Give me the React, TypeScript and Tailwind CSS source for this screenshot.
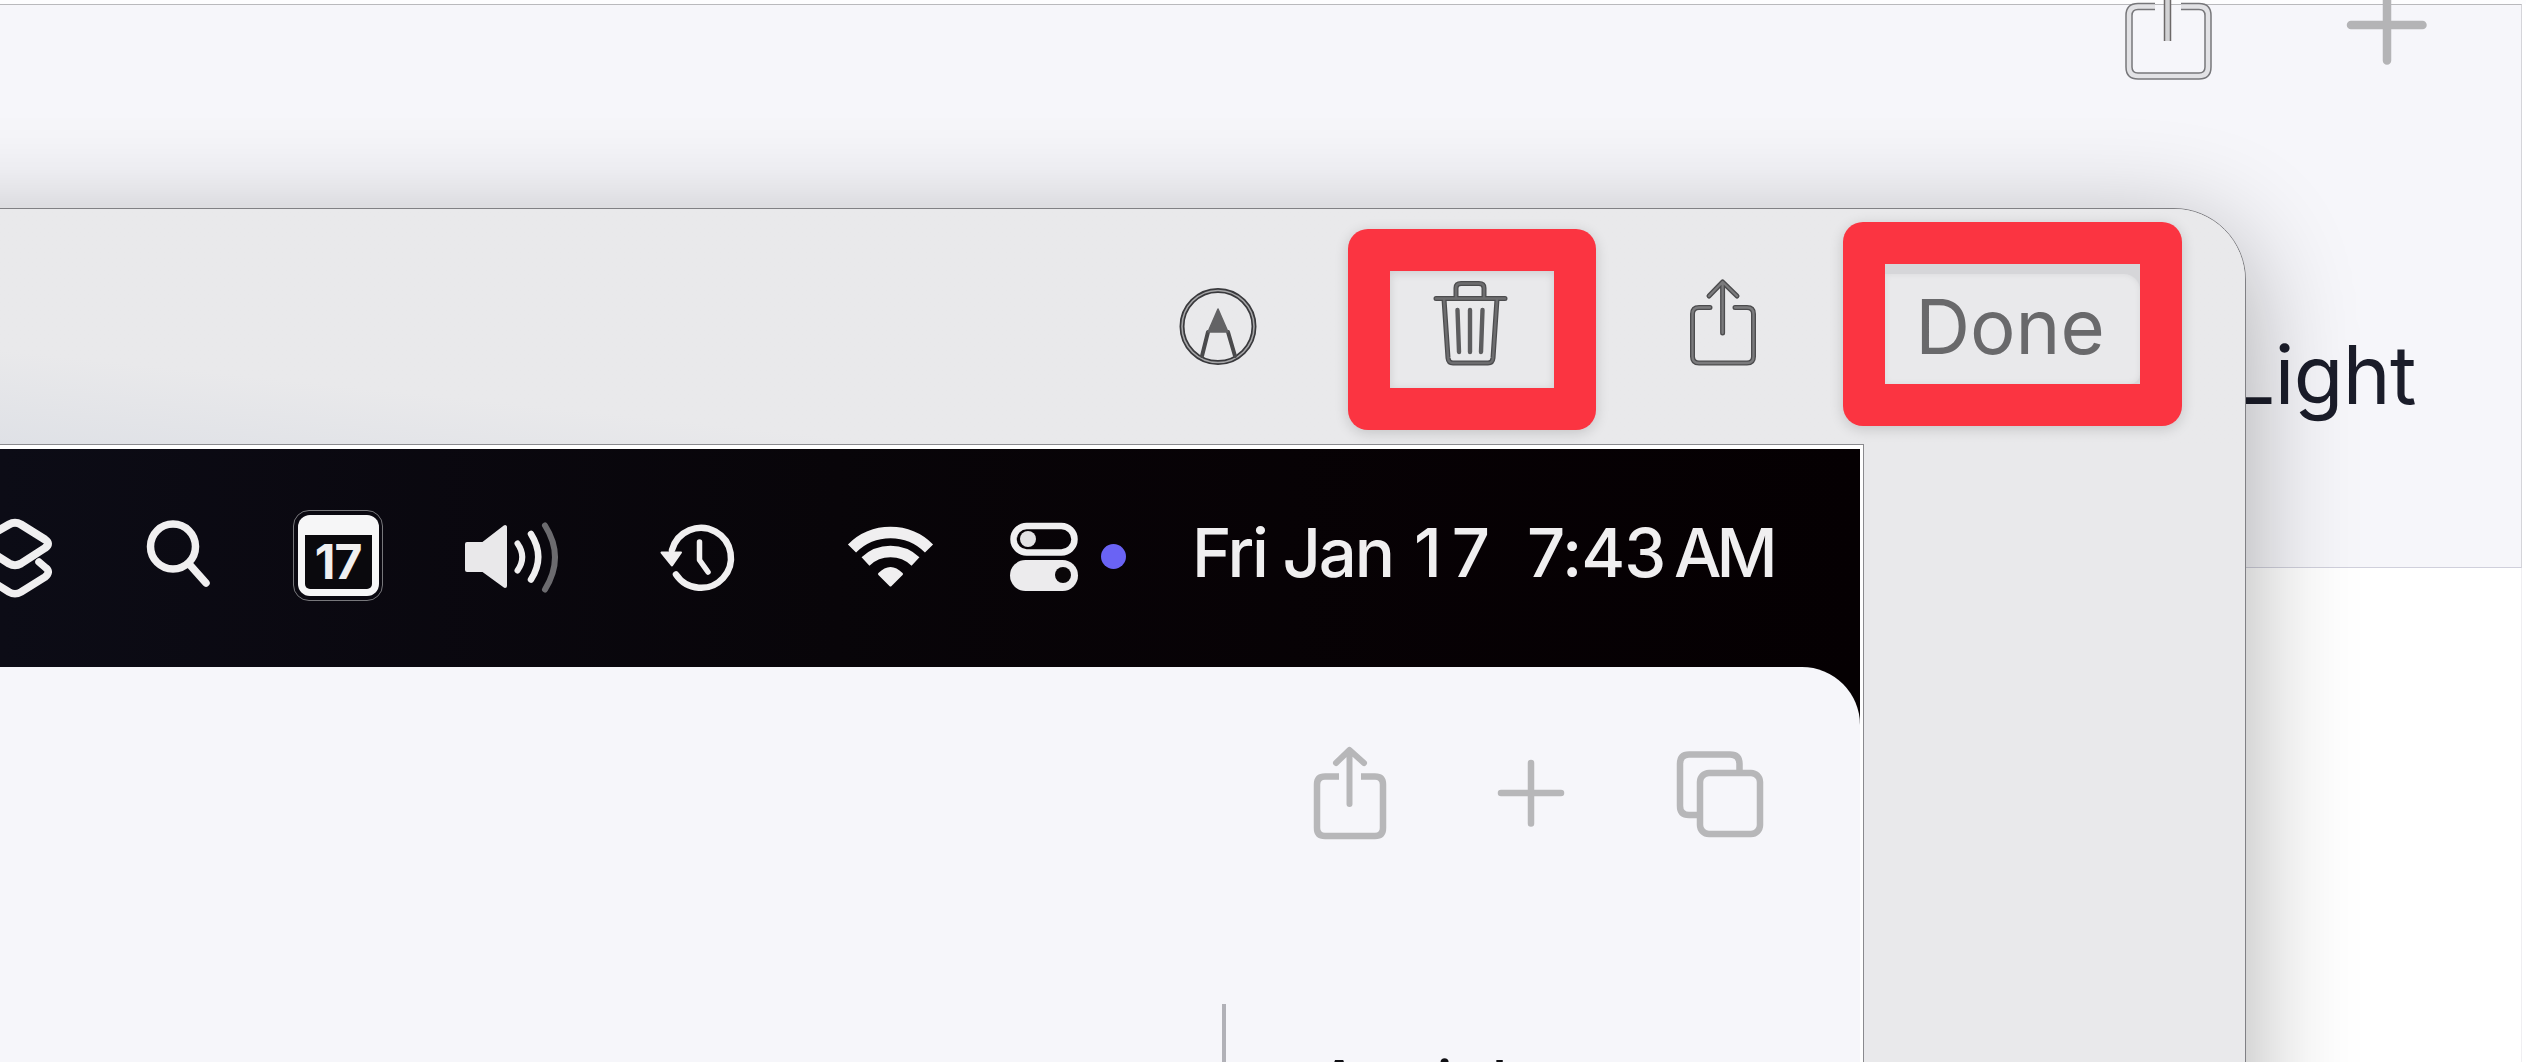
import type { ReactNode } from "react";

type GlyphProps = { box: string; className: string; children: ReactNode };

function Glyph({ box, className, children }: GlyphProps) {
  return (
    <svg viewBox={box} className={`shrink-0 ${className}`} fill="none" strokeLinecap="round" strokeLinejoin="round">
      {children}
    </svg>
  );
}

/* Stroke with a darker rim and a softer core */
function Rimmed({ d, rim, core, w, c }: { d: string; rim: string; core: string; w: number; c: number }) {
  return (
    <>
      <path d={d} stroke={rim} strokeWidth={w} />
      <path d={d} stroke={core} strokeWidth={c} />
    </>
  );
}

function BackgroundWindow() {
  return (
    <div className="flex h-full flex-col bg-white">
      <div className="h-[4px] shrink-0 bg-[#fdfdfe]" />
      <div className="mr-[4px] flex h-[564px] shrink-0 flex-col border-t border-r border-b border-t-[#b9b9bc] border-r-[#d5d5da] border-b-[#d0d0dc] bg-[#f6f6fa]">
        <div className="-mt-[5px] flex h-[90px] items-start justify-end pr-[89px]">
          <Glyph box="2120 0 96 86" className="h-[86px] w-[96px]">
            <g strokeLinecap="butt">
              <Rimmed d="M2155 6.500H2138Q2129 6.500 2129 15.500V67Q2129 76 2138 76H2199Q2208 76 2208 67V15.500Q2208 6.500 2199 6.500H2181" rim="#77777a" core="#e2e2e5" w={7.5} c={4.5} />
              <Rimmed d="M2167.500 -4V41" rim="#6c6868" core="#d2d2d4" w={7.5} c={4.5} />
            </g>
          </Glyph>
          <Glyph box="2340 0 92 72" className="ml-[124px] h-[72px] w-[92px]">
            <path d="M2351 25H2422.500M2387 -10V60.500" stroke="#b4b4b6" strokeWidth="8.500" />
          </Glyph>
        </div>
        <div className="mt-[225px] flex justify-end pr-[105px]">
          <span className="font-[Inter,sans-serif] text-[81px] leading-[120px] tracking-[-0.6px] text-[#1b1d2a]">Light</span>
        </div>
      </div>
      <div className="mr-[4px] grow border-r border-[#f0eff2] bg-white" />
    </div>
  );
}

function Toolbar() {
  return (
    <div className="flex h-[235px] shrink-0 items-start justify-end bg-linear-to-tr from-[#dfe1e6] via-[#e9e9eb] via-20% to-[#e9e9eb] pr-[63px]">
      <Glyph box="1178 286 80 80" className="mt-[77px] h-[80px] w-[80px]">
        <circle cx="1218" cy="326.500" r="36" stroke="#39393c" strokeWidth="5" />
        <circle cx="1218" cy="326.500" r="36" stroke="#a6a6a8" strokeWidth="1.600" />
        <path d="M1208 332L1202 356M1228 332L1235 356" stroke="#4a4a4c" strokeWidth="4" />
        <path d="M1218 309L1228 332H1208Z" fill="#636365" stroke="#636365" strokeWidth="1.500" />
      </Glyph>
      <div className="mt-[20px] ml-[90px] flex h-[201px] w-[248px] items-start justify-center rounded-[20px] bg-[#fb3441] p-[42px] shadow-[0_3px_14px_rgba(0,0,0,0.16)]">
        <div className="flex h-[117px] w-[164px] items-start justify-center bg-[#e9e9eb] shadow-[inset_0_2px_10px_rgba(0,0,0,0.12)]">
          <Glyph box="1430 277 84 92" className="mt-[6px] mr-[2px] h-[92px] w-[84px]">
            <Rimmed d="M1437 298.500H1506M1457 298V288Q1457 283.500 1462 283.500H1480Q1485 283.500 1485 288V298M1445 299L1449 358Q1449.500 363 1454 363H1489Q1493.500 363 1494 358L1498 299" rim="#4c4c4e" core="#6d6d6f" w={5} c={2.5} />
            <path d="M1458.500 310L1460 352M1471 310V352M1483.500 310L1482 352" stroke="#5d5d5f" strokeWidth="4.400" />
          </Glyph>
        </div>
      </div>
      <Glyph box="1686 276 74 94" className="mt-[67px] ml-[90px] h-[94px] w-[74px]">
        <Rimmed d="M1710 307.500H1699Q1692.500 307.500 1692.500 314V356.500Q1692.500 363 1699 363H1747Q1753.500 363 1753.500 356.500V314Q1753.500 307.500 1747 307.500H1735M1722.600 283V333M1709 296L1722.600 282L1737 296" rim="#4c4c4e" core="#7b7b7d" w={5} c={2.3} />
      </Glyph>
      <div className="mt-[13px] ml-[83px] flex h-[204px] w-[339px] items-start rounded-[20px] bg-[#fb3441] p-[42px] shadow-[0_3px_14px_rgba(0,0,0,0.16)]">
        <div className="flex h-[120px] w-[255px] bg-[#d6d6d9] pt-[10px]">
          <div className="flex h-[110px] w-full items-center justify-center rounded-tr-[16px] rounded-br-[10px] bg-[#e9e9eb] pr-[5px] pb-[7px] shadow-[inset_0_0_6px_rgba(0,0,0,0.07)]">
            <span className="font-[Inter,sans-serif] text-[76px] leading-none text-[#69696b]">Done</span>
          </div>
        </div>
      </div>
    </div>
  );
}

function MenuBar() {
  return (
    <div className="flex h-[218px] shrink-0 items-start bg-linear-to-r from-[#0c0c16] via-[#080509] via-45% to-[#050002] pt-[61px] text-[#f0eff0]">
      <Glyph box="0 510 60 94" className="h-[94px] w-[60px]">
        <path d="M-17 547Q-23 543.500 -17 539.500L9 524.500Q15 521 21 524.500L45 539.500Q51 543.500 45 548L21 563.500Q15 567 9 563.500Z" stroke="#f0eff0" strokeWidth="8" />
        <path d="M39 562L46 568Q51 572 45 577L21 592Q15 595.500 9 592L-10 580" stroke="#f0eff0" strokeWidth="7.500" />
      </Glyph>
      <Glyph box="140 510 76 84" className="ml-[80px] h-[84px] w-[76px]">
        <circle cx="173" cy="546.500" r="22.500" stroke="#f0eff0" strokeWidth="7.500" />
        <path d="M190 565L206 583" stroke="#f0eff0" strokeWidth="7.500" />
      </Glyph>
      <div className="ml-[77px] flex h-[91px] w-[90px] items-center justify-center rounded-[16px] border border-[#77777b]">
        <div className="flex h-[81px] w-[81px] flex-col rounded-[12px] bg-[#f6f6f7] px-[7px] pt-[20px] pb-[7px]">
          <div className="flex h-[54px] items-center justify-center rounded-b-[5px] bg-[#0a090d]">
            <span className="font-[Inter,sans-serif] text-[48px] leading-none font-bold tracking-[-1px]">17</span>
          </div>
        </div>
      </div>
      <Glyph box="460 510 106 94" className="ml-[76px] h-[94px] w-[106px]">
        <path d="M468 544H484L506 527V586L484 570H468Z" fill="#e9e8ea" stroke="#e9e8ea" strokeWidth="4" />
        <path d="M518.500 543.500Q528 557 518.500 570.500" stroke="#f0eff0" strokeWidth="6" />
        <path d="M532 534Q546.500 557 532 579.500" stroke="#f0eff0" strokeWidth="6.500" />
        <path d="M546 525.500Q566 557 546 589.500" stroke="#6c6b6f" strokeWidth="6" />
      </Glyph>
      <Glyph box="656 516 84 84" className="mt-[5px] ml-[90px] h-[84px] w-[84px]">
        <path d="M673 551A30 30 0 1 1 677 575.500" stroke="#f0eff0" strokeWidth="6.500" />
        <path d="M662.500 553.500H682L673 566.500Z" fill="#f0eff0" stroke="#f0eff0" strokeWidth="2" />
        <path d="M700.500 543V561L709 573" stroke="#f0eff0" strokeWidth="5.500" />
      </Glyph>
      <Glyph box="844 516 94 80" className="mt-[5px] ml-[104px] h-[80px] w-[94px]">
        <path d="M853 549.500A54.500 54.500 0 0 1 930 549.500" stroke="#f0eff0" strokeWidth="11.500" strokeLinecap="butt" />
        <path d="M866.500 562.500A36.500 36.500 0 0 1 916.500 562.500" stroke="#f0eff0" strokeWidth="11.500" strokeLinecap="butt" />
        <path d="M880.500 575Q891.500 564 902.500 575L891.500 586Z" fill="#f0eff0" stroke="#f0eff0" strokeWidth="3" />
      </Glyph>
      <Glyph box="1006 516 78 80" className="mt-[6px] ml-[68px] h-[80px] w-[78px]">
        <rect x="1014.500" y="526" width="61" height="26.500" rx="13.200" stroke="#f0eff0" strokeWidth="6.500" />
        <circle cx="1029" cy="539" r="8" fill="#e3e2e4" />
        <rect x="1011" y="560" width="68" height="31" rx="15.500" fill="#ecebed" />
        <circle cx="1064" cy="575" r="8" fill="#0a0709" />
      </Glyph>
      <div className="mt-[34px] ml-[18px] size-[25px] rounded-full bg-[#6a63f4]" />
      <div className="mt-[9px] ml-[66px] flex font-[Inter,sans-serif] text-[67px] leading-[68px] font-medium whitespace-pre">
        <span className="w-[222px] tracking-[-2.2px]">Fri Jan</span>
        <span className="w-[113px] tracking-[10px]">17</span>
        <span className="w-[147px] tracking-[-1px]">7:43</span>
        <span className="tracking-[-5px]">AM</span>
      </div>
    </div>
  );
}

function CapturedPage() {
  return (
    <div className="grow bg-[#050002]">
      <div className="flex h-full flex-col rounded-tr-[58px] bg-[#f6f6fa]">
        <div className="flex shrink-0 items-start justify-end pt-[76px] pr-[93px]">
          <Glyph box="1308 744 84 100" className="h-[100px] w-[84px]">
            <path d="M1339 777.500H1325Q1317 777.500 1317 785.500V829Q1317 837 1325 837H1375Q1383 837 1383 829V785.500Q1383 777.500 1375 777.500H1361" stroke="#b7b7b9" strokeWidth="6.500" strokeLinecap="butt" />
            <path d="M1349.500 752V805M1336 764L1349.500 751L1364 764" stroke="#b7b7b9" strokeWidth="6" />
          </Glyph>
          <Glyph box="1494 756 74 76" className="mt-[12px] ml-[102px] h-[76px] w-[74px]">
            <path d="M1501 794H1561M1531 764V824.500" stroke="#b7b7b9" strokeWidth="6.500" />
          </Glyph>
          <Glyph box="1672 748 95 94" className="mt-[4px] ml-[104px] h-[94px] w-[95px]">
            <path d="M1697 816H1689Q1680 816 1680 807V765Q1680 755.500 1689 755.500H1730Q1739.500 755.500 1739.500 765V771" stroke="#b7b7b9" strokeWidth="6.500" strokeLinecap="butt" />
            <rect x="1700" y="774" width="60" height="61" rx="9" stroke="#b7b7b9" strokeWidth="6.500" />
          </Glyph>
        </div>
        <div className="mt-[161px] flex h-[58px] overflow-hidden">
          <div className="ml-[1222px] h-full w-[4px] bg-[#b1b1b7]" />
          <div className="mt-[48px] ml-[92px] flex font-[Inter,sans-serif] text-[60px] leading-[60px] font-medium text-[#101014]">
            <span className="w-[80px]">A</span>
            <span className="w-[39px]">t</span>
            <span className="w-[55px]">i</span>
            <span>l</span>
          </div>
        </div>
      </div>
    </div>
  );
}

export default function App() {
  return (
    <div className="relative h-[1062px] w-[2526px] overflow-hidden bg-white">
      <BackgroundWindow />
      <div className="absolute top-[208px] -left-[300px] flex h-[1200px] w-[2546px] flex-col overflow-hidden rounded-tr-[72px] border border-[#808084] bg-[#e9e9eb] pl-[299px] shadow-[0_24px_110px_rgba(0,0,0,0.32)]">
        <Toolbar />
        <div className="flex h-[618px] w-[1864px] shrink-0 flex-col border-t border-r border-[#8a8a8e] bg-white pt-[4px] pr-[3px]">
          <MenuBar />
          <CapturedPage />
        </div>
      </div>
    </div>
  );
}
